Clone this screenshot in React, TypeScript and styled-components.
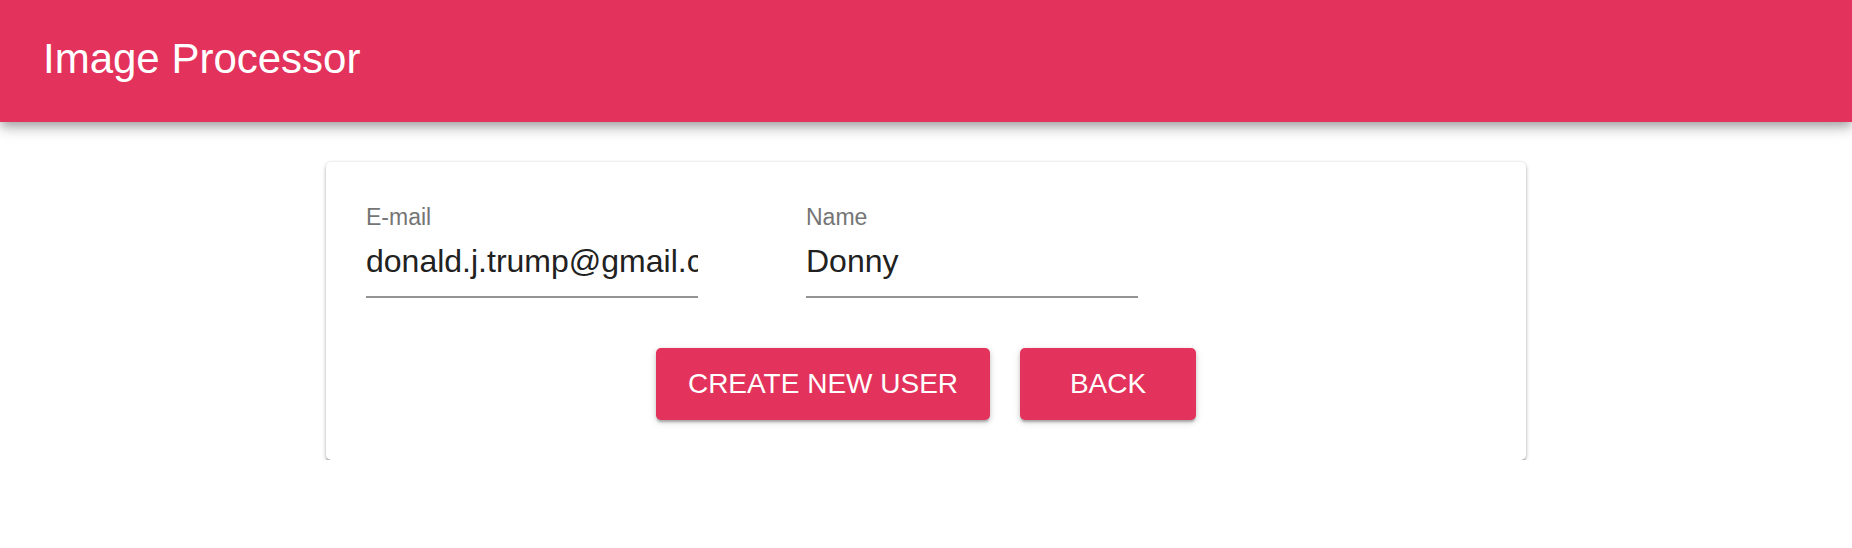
import React from 'react'
import styled, { createGlobalStyle } from 'styled-components'

const GlobalStyle = createGlobalStyle`
  html, body {
    margin: 0;
    padding: 0;
    background: #ffffff;
    font-family: 'Liberation Sans', Arial, Helvetica, sans-serif;
  }
`;

const fields = [
  { label: 'E-mail', value: 'donald.j.trump@gmail.com' },
  { label: 'Name', value: 'Donny' },
];

const App: React.FC = () => {
  return (
    <>
      <GlobalStyle />
      <AppBar>
        <Title>Image Processor</Title>
      </AppBar>
      <Main>
        <Card>
          <FieldRow>
            {fields.map((field) => (
              <Field key={field.label}>
                <Label>{field.label}</Label>
                <Input type="text" value={field.value} readOnly />
              </Field>
            ))}
          </FieldRow>
          <ButtonRow>
            <Button wide>Create new user</Button>
            <Button>Back</Button>
          </ButtonRow>
        </Card>
      </Main>
    </>
  )
}

export default App

const AppBar = styled.header`
  position: relative;
  z-index: 2;
  display: flex;
  align-items: center;
  height: 122px;
  padding: 0 43px 5px;
  box-sizing: border-box;
  background-color: #e3325b;
  box-shadow: 0px 4px 8px -2px rgba(0,0,0,0.2), 0px 8px 10px 0px rgba(0,0,0,0.14), 0px 2px 20px 0px rgba(0,0,0,0.12);
`;

const Title = styled.h1`
  margin: 0;
  font-size: 42px;
  line-height: 1;
  font-weight: 400;
  color: #ffffff;
`;

const Main = styled.main`
  display: flex;
  justify-content: center;
  padding-top: 40px;
`;

const Card = styled.section`
  width: 1200px;
  box-sizing: border-box;
  padding: 44px 40px 40px;
  background: #ffffff;
  border-radius: 5px;
  box-shadow: 0px 0px 3px 0px rgba(0,0,0,0.1), 0px 2px 4px 0px rgba(0,0,0,0.24), 0px 3px 2px -1px rgba(0,0,0,0.28);
`;

const FieldRow = styled.div`
  display: flex;
  gap: 108px;
`;

const Field = styled.div`
  display: flex;
  flex-direction: column;
  width: 332px;
`;

const Label = styled.label`
  font-size: 23px;
  line-height: 23px;
  color: #757575;
`;

const Input = styled.input`
  margin-top: 12px;
  width: 100%;
  height: 36px;
  padding: 2px 0 17px;
  box-sizing: content-box;
  border: none;
  border-bottom: 2px solid #949494;
  outline: none;
  background: transparent;
  font-family: 'Liberation Sans', Arial, Helvetica, sans-serif;
  font-size: 32px;
  color: #212121;
`;

const ButtonRow = styled.div`
  display: flex;
  justify-content: center;
  gap: 30px;
  margin-top: 50px;
`;

const Button = styled.button<{ wide?: boolean }>`
  display: flex;
  justify-content: center;
  align-items: center;
  width: ${props => (props.wide ? '334px' : '176px')};
  height: 72px;
  padding: 0;
  border: none;
  border-radius: 5px;
  background-color: #e3325b;
  color: #ffffff;
  font-family: 'Liberation Sans', Arial, Helvetica, sans-serif;
  font-size: 28px;
  text-transform: uppercase;
  cursor: pointer;
  box-shadow: 0px 3px 2px -1px rgba(0,0,0,0.2), 0px 2px 4px 0px rgba(0,0,0,0.14), 0px 2px 8px 0px rgba(0,0,0,0.12);
`;
